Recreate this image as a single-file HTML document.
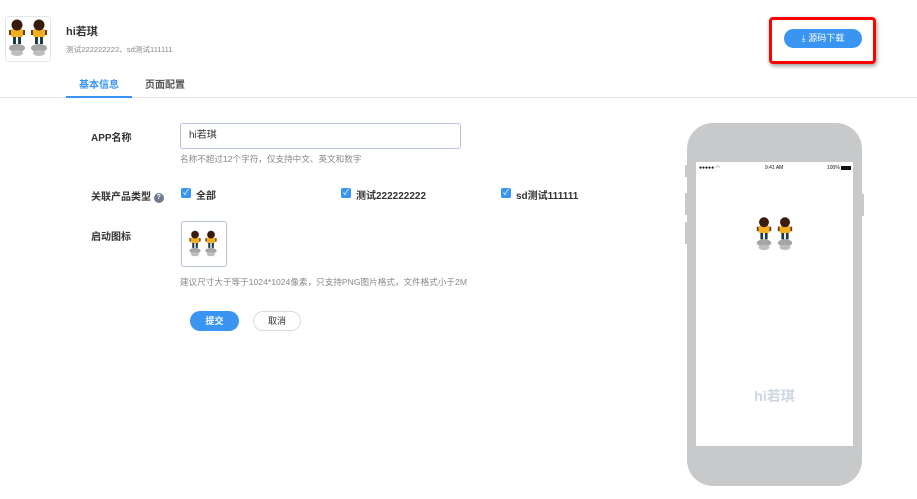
<!DOCTYPE html>
<html><head><meta charset="utf-8"><style>
*{margin:0;padding:0;box-sizing:border-box}
body{width:917px;height:499px;background:#fff;font-family:"Liberation Sans","Noto Sans CJK SC",sans-serif;position:relative;overflow:hidden;color:#333}
.a{position:absolute}
.lbl{font-size:10px;color:#333;font-weight:bold}
.hint{font-size:8.6px;color:#888}
.cb{width:10px;height:10px;background:#3a95f2;border-radius:2px;color:#fff;font-size:8px;line-height:10px;text-align:center}
.ct{font-size:10px;font-weight:bold;color:#333}
</style></head><body>
<svg width="0" height="0" style="position:absolute"><defs>
<g id="fig">
<ellipse cx="10" cy="31" rx="8" ry="4" fill="#a6a6a6"/>
<ellipse cx="10" cy="36" rx="6" ry="3" fill="#bdbdbd"/>
<rect x="6" y="19" width="3" height="8" fill="#1e3a4a"/><rect x="11" y="19" width="3" height="8" fill="#1e3a4a"/>
<rect x="4" y="12" width="12" height="8" rx="2" fill="#f2b01e"/>
<circle cx="10" cy="8" r="5.5" fill="#3a1c0c"/>
<rect x="2" y="13" width="2" height="5" fill="#6b3a1e"/><rect x="16" y="13" width="2" height="5" fill="#6b3a1e"/>
</g></defs></svg>
<div class="a" style="left:5px;top:16px;width:46px;height:46px;border:1px solid #e4e7ec;border-radius:3px"></div>
<svg class="a" style="left:7px;top:17px" width="20" height="40" viewBox="0 0 20 40"><use href="#fig"/></svg>
<svg class="a" style="left:29px;top:17px" width="20" height="40" viewBox="0 0 20 40"><use href="#fig"/></svg>
<div class="a" style="left:66px;top:23px;font-size:11px;font-weight:bold;color:#333">hi若琪</div>
<div class="a" style="left:66px;top:44px;font-size:7.6px;color:#888">测试222222222、sd测试111111</div>
<div class="a" style="left:79px;top:76px;font-size:10px;color:#3a95f2;font-weight:bold">基本信息</div>
<div class="a" style="left:145px;top:76px;font-size:10px;color:#555;font-weight:bold">页面配置</div>
<div class="a" style="left:0;top:97px;width:917px;height:1px;background:#e6e8eb"></div>
<div class="a" style="left:66px;top:96px;width:66px;height:2px;background:#3a95f2"></div>

<div class="a" style="left:769px;top:17px;width:107px;height:47px;border:3px solid #f00;border-radius:4px;box-shadow:1px 2px 4px rgba(0,0,0,.4)"></div>
<div class="a" style="left:784px;top:29px;width:78px;height:19px;background:#3a95f2;border-radius:10px;color:#fff;font-size:9px;line-height:19px;text-align:center">⤓ 源码下载</div>

<div class="a lbl" style="left:91px;top:129px">APP名称</div>
<div class="a" style="left:180px;top:123px;width:281px;height:26px;border:1px solid #b7c2d6;border-radius:3px;font-size:10px;line-height:24px;padding-left:8px;color:#333">hi若琪</div>
<div class="a hint" style="left:180px;top:153px">名称不超过12个字符，仅支持中文、英文和数字</div>
<div class="a lbl" style="left:91px;top:188px">关联产品类型 <span style="display:inline-block;width:10px;height:10px;border-radius:5px;background:#6f7b8e;color:#fff;font-size:7px;text-align:center;line-height:10px;vertical-align:1px">?</span></div>
<div class="a cb" style="left:181px;top:188px">✓</div><div class="a ct" style="left:196px;top:187px">全部</div>
<div class="a cb" style="left:341px;top:188px">✓</div><div class="a ct" style="left:356px;top:187px">测试222222222</div>
<div class="a cb" style="left:501px;top:188px">✓</div><div class="a ct" style="left:516px;top:187px">sd测试111111</div>
<div class="a lbl" style="left:91px;top:228px">启动图标</div>
<div class="a" style="left:181px;top:221px;width:46px;height:46px;border:1px solid #b7c2d6;border-radius:3px"></div>
<svg class="a" style="left:188px;top:229px" width="14" height="28" viewBox="0 0 20 40"><use href="#fig"/></svg>
<svg class="a" style="left:204px;top:229px" width="14" height="28" viewBox="0 0 20 40"><use href="#fig"/></svg>
<div class="a hint" style="left:180px;top:276px">建议尺寸大于等于1024*1024像素，只支持PNG图片格式，文件格式小于2M</div>
<div class="a" style="left:190px;top:311px;width:49px;height:20px;background:#3a95f2;border-radius:10px;color:#fff;font-size:9px;font-weight:bold;line-height:20px;text-align:center">提交</div>
<div class="a" style="left:253px;top:311px;width:48px;height:20px;border:1px solid #d8dce2;border-radius:10px;color:#333;font-size:9px;line-height:18px;text-align:center">取消</div>

<div class="a" style="left:685px;top:165px;width:4px;height:12px;background:#c8c9ca"></div>
<div class="a" style="left:685px;top:193px;width:4px;height:22px;background:#c8c9ca"></div>
<div class="a" style="left:685px;top:222px;width:4px;height:22px;background:#c8c9ca"></div>
<div class="a" style="left:860px;top:194px;width:4px;height:22px;background:#c8c9ca"></div>
<div class="a" style="left:687px;top:123px;width:175px;height:363px;background:#c8c9ca;border-radius:26px"></div>
<div class="a" style="left:696px;top:162px;width:157px;height:284px;background:#fff"></div>
<div class="a" style="left:699px;top:165px;font-size:5px;color:#111">●●●●● ◠</div>
<div class="a" style="left:765px;top:165px;font-size:5px;color:#111">9:41 AM</div>
<div class="a" style="left:827px;top:165px;font-size:5px;color:#111">100% <span style="display:inline-block;width:10px;height:4px;background:#111;vertical-align:-1px"></span></div>
<svg class="a" style="left:755px;top:213px" width="18" height="40" viewBox="0 0 20 40"><use href="#fig"/></svg>
<svg class="a" style="left:776px;top:213px" width="18" height="40" viewBox="0 0 20 40"><use href="#fig"/></svg>
<div class="a" style="left:696px;top:386px;width:157px;text-align:center;font-size:14px;font-weight:bold;color:#cdd6e2">hi若琪</div>
</body></html>
